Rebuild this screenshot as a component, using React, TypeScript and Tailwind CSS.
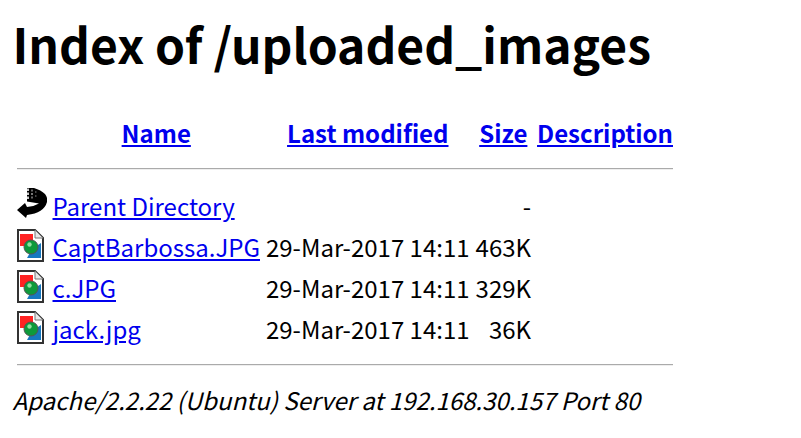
import React from "react";
function ParentIcon() {
  return (
    <svg width="30" height="33" viewBox="0 0 30 33" className="block">
      <defs><filter id="pb" x="-10%" y="-10%" width="120%" height="120%"><feGaussianBlur stdDeviation="0.45" /></filter></defs>
      <g filter="url(#pb)">
        <path d="M10 0 L17 0 Q24 2 28 6 Q31 10 30 14 Q27 25 10 27 L9 30 L0 22 L8 15 L10 19 Q16 19 22 15.500 L10 13.500 Z" fill="#000" />
        <rect x="10" y="0.500" width="2" height="2.500" fill="#ccc" />
        <rect x="10" y="4.500" width="2" height="2.500" fill="#ccc" />
        <rect x="10" y="8.500" width="2" height="2.500" fill="#ccc" />
        <rect x="14" y="1.500" width="2" height="2" fill="#666" />
        <rect x="14" y="5" width="2" height="2" fill="#777" />
        <rect x="14" y="8.500" width="2" height="2" fill="#666" />
        <rect x="18" y="3" width="1.500" height="2" fill="#444" />
        <rect x="18" y="7" width="1.500" height="2" fill="#444" />
      </g>
    </svg>
  );
}
function ImageIcon() {
  return (
    <svg width="30" height="33" viewBox="0 0 30 33" className="block">
      <defs><filter id="ib" x="-10%" y="-10%" width="120%" height="120%"><feGaussianBlur stdDeviation="0.35" /></filter></defs>
      <g filter="url(#ib)">
        <path d="M1 1 H18 L26 9 V32 H1 Z" fill="#fff" stroke="#333" strokeWidth="2" />
        <path d="M18 1 V9 H26 Z" fill="#e8e8e8" stroke="#777" strokeWidth="1" />
        <rect x="3" y="5" width="13" height="12" fill="#f22" />
        <path d="M15 20 L24 14 V29 H10 Z" fill="#1878c0" />
        <circle cx="14" cy="18" r="7" fill="#0a9a3a" stroke="#555" strokeWidth="1" />
        <circle cx="12.500" cy="15.500" r="2.200" fill="#8fe0a0" />
      </g>
    </svg>
  );
}
function Row({ icon, name, date, size }: { icon: React.ReactNode; name: string; date: string; size: string }) {
  return (
    <tr>
      <td className="p-[2px] align-top">{icon}</td>
      <td className="p-[2px] align-top"><a href="#" className="text-[#0000ee] underline">{name}</a></td>
      <td className="p-[2px] text-right align-top">{date}</td>
      <td className="p-[2px] text-right align-top">{size}</td>
      <td className="p-[2px] align-top"></td>
    </tr>
  );
}
export default function App() {
  return (
    <div className="bg-white text-black text-[24px] leading-[35px] min-h-[438px] overflow-hidden px-[12.5px] font-['Noto_Sans_CJK_JP',sans-serif]">
      <h1 className="text-[48px] font-bold leading-[70px] pt-[8px] pb-[33px]">Index of /uploaded_images</h1>
      <table className="border-separate border-spacing-[2px]">
        <tbody>
          <tr>
            <th className="p-[2px] font-bold"></th>
            <th className="p-[2px] font-bold"><a href="#" className="text-[#0000ee] underline">Name</a></th>
            <th className="p-[2px] font-bold"><a href="#" className="text-[#0000ee] underline">Last modified</a></th>
            <th className="p-[2px] font-bold"><a href="#" className="text-[#0000ee] underline">Size</a></th>
            <th className="p-[2px] font-bold"><a href="#" className="text-[#0000ee] underline">Description</a></th>
          </tr>
          <tr><th colSpan={5} className="p-[2px] font-normal"><hr className="border-t border-[#aaa] border-b border-b-[#eee] my-[12px]" /></th></tr>
          <Row icon={<ParentIcon />} name="Parent Directory" date=" " size="- " />
          <Row icon={<ImageIcon />} name="CaptBarbossa.JPG" date="29-Mar-2017 14:11" size="463K" />
          <Row icon={<ImageIcon />} name="c.JPG" date="29-Mar-2017 14:11" size="329K" />
          <Row icon={<ImageIcon />} name="jack.jpg" date="29-Mar-2017 14:11" size="36K" />
          <tr><th colSpan={5} className="p-[2px] font-normal"><hr className="border-t border-[#aaa] border-b border-b-[#eee] my-[12px]" /></th></tr>
        </tbody>
      </table>
      <address className="italic">Apache/2.2.22 (Ubuntu) Server at 192.168.30.157 Port 80</address>
    </div>
  );
}
